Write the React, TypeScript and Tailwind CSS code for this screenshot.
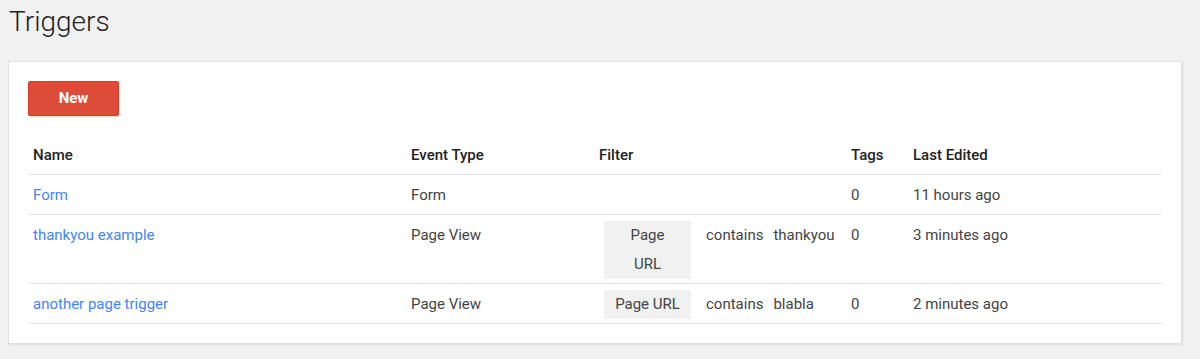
import React from "react";

const font = { fontFamily: "Roboto, 'Noto Sans', sans-serif" };

type Row = {
  name: string;
  type: string;
  filter?: { chip: React.ReactNode; op: string; value: string };
  tags: string;
  edited: string;
};

const rows: Row[] = [
  { name: "Form", type: "Form", tags: "0", edited: "11 hours ago" },
  {
    name: "thankyou example",
    type: "Page View",
    filter: {
      chip: (
        <>
          Page
          <br />
          URL
        </>
      ),
      op: "contains",
      value: "thankyou",
    },
    tags: "0",
    edited: "3 minutes ago",
  },
  {
    name: "another page trigger",
    type: "Page View",
    filter: { chip: "Page URL", op: "contains", value: "blabla" },
    tags: "0",
    edited: "2 minutes ago",
  },
];

function Cols({ children, header }: { children: React.ReactNode[]; header?: boolean }) {
  return (
    <div
      className={
        "grid grid-cols-[378px_188px_252px_62px_1fr] border-b border-[#e5e5e5] text-[15px] leading-[29px] " +
        (header ? "font-medium text-[#222]" : "text-[#444]")
      }
    >
      {children.map((c, i) => (
        <div key={i} className="pl-[5px] pt-[6px] pb-[4px]">
          {c}
        </div>
      ))}
    </div>
  );
}

export default function App() {
  return (
    <div style={font} className="min-h-[359px] w-[1200px] bg-[#f1f1f1] px-[8px] pt-[1px]">
      <h1 className="ml-[1px] mt-[2px] text-[28px] font-light leading-[38px] text-[#222]">Triggers</h1>
      <div className="mt-[20px] w-[1174px] border border-[#e0e0e0] bg-white p-[19px] shadow-[1px_1px_2px_rgba(0,0,0,0.08)]">
        <button className="h-[35px] w-[91px] rounded-[2px] border border-[#d3402f] bg-[#dd4b39] text-[15px] font-bold text-white shadow-[0_1px_2px_rgba(0,0,0,0.2)]">
          New
        </button>
        <div className="mt-[19px]">
          <Cols header>
            {["Name", "Event Type", "Filter", "Tags", "Last Edited"]}
          </Cols>
          {rows.map((r) => (
            <Cols key={r.name}>
              {[
                <span className="text-[#4285f4]">{r.name}</span>,
                r.type,
                r.filter ? (
                  <div className="flex items-start">
                    <span className="ml-[5px] inline-block w-[87px] rounded-[2px] bg-[#f1f1f1] text-center">
                      {r.filter.chip}
                    </span>
                    <span className="ml-[15px]">{r.filter.op}</span>
                    <span className="ml-[10px]">{r.filter.value}</span>
                  </div>
                ) : (
                  ""
                ),
                r.tags,
                r.edited,
              ]}
            </Cols>
          ))}
        </div>
      </div>
    </div>
  );
}
